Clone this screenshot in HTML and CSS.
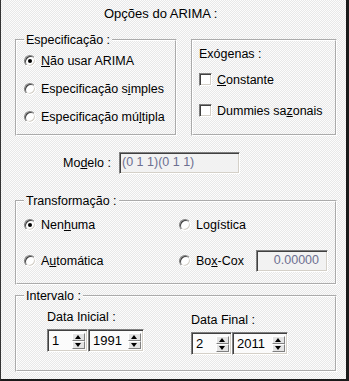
FILE: index.html
```html
<!DOCTYPE html>
<html lang="pt-BR">
<head>
  <meta charset="UTF-8">
  <meta name="viewport" content="width=device-width, initial-scale=1.0">
  <title>Opções do ARIMA</title>
  <link rel="stylesheet" href="styles.css">
</head>
<body>
  <div class="dialog">
    <div class="title">Opções do ARIMA :</div>

    <div class="top-row">
      <fieldset class="group spec">
        <legend>Especificação :</legend>
        <label class="opt"><span class="radio on"></span><u>N</u>ão usar ARIMA</label>
        <label class="opt"><span class="radio"></span>Especificação s<u>i</u>mples</label>
        <label class="opt"><span class="radio"></span>Especificação mú<u>l</u>tipla</label>
      </fieldset>

      <div class="group exo">
        <div class="exo-title">Exógenas :</div>
        <label class="opt tall first"><span class="check"></span><u>C</u>onstante</label>
        <label class="opt tall"><span class="check"></span>Dummies sa<u>z</u>onais</label>
      </div>
    </div>

    <div class="model-row">
      <span class="model-label">Mo<u>d</u>elo :</span>
      <div class="field model-field">(0 1 1)(0 1 1)</div>
    </div>

    <fieldset class="group wide transf">
      <legend>Transformação :</legend>
      <div class="transf-grid">
        <label class="opt mid"><span class="radio on"></span>Nen<u>h</u>uma</label>
        <label class="opt mid"><span class="radio"></span>Lo<u>g</u>ística</label>
        <label class="opt mid"><span class="radio"></span>A<u>u</u>tomática</label>
        <div class="opt mid">
          <span class="radio"></span>Bo<u>x</u>-Cox
          <div class="field boxcox">0.00000</div>
        </div>
      </div>
    </fieldset>

    <fieldset class="group wide interval">
      <legend>Intervalo :</legend>
      <div class="dates">
        <div class="date">
          <div class="date-label">Data Inicial :</div>
          <div class="spins">
            <div class="spin short"><span>1</span><span class="arrows"><i class="up"></i><i class="down"></i></span></div>
            <div class="spin long"><span>1991</span><span class="arrows"><i class="up"></i><i class="down"></i></span></div>
          </div>
        </div>
        <div class="date final">
          <div class="date-label">Data Final :</div>
          <div class="spins">
            <div class="spin short"><span>2</span><span class="arrows"><i class="up"></i><i class="down"></i></span></div>
            <div class="spin long"><span>2011</span><span class="arrows"><i class="up"></i><i class="down"></i></span></div>
          </div>
        </div>
      </div>
    </fieldset>
  </div>
</body>
</html>
```

FILE: styles.css
```css
body {
  margin: 0;
  font-family: "Liberation Sans", Arial, sans-serif;
  font-size: 12.5px;
  color: #000;
}
.dialog {
  width: 349px;
  height: 381px;
  box-sizing: border-box;
  padding-left: 14px;
  border-left: 1px solid #333;
  border-right: 3px solid #1a1a1a;
  border-bottom: 2px solid #1a1a1a;
  background: repeating-conic-gradient(#fcfcfc 0 25%, #e8e8e8 0 50%) 0 0 / 2px 2px;
}
.title {
  font-size: 13px;
  line-height: 20px;
  padding: 4px 0 9px 89px;
}
.top-row {
  display: flex;
  align-items: flex-start;
  gap: 14px;
}
.group {
  margin: 0;
  min-width: 0;
  box-sizing: border-box;
  border: 2px groove #fff;
  padding: 0 7px;
}
legend {
  padding: 0 2px;
  line-height: 14px;
}
.spec {
  width: 162px;
  height: 103px;
}
.exo {
  width: 146px;
  height: 97px;
  margin-top: 6px;
  padding: 6px 6px 0;
}
.exo-title {
  line-height: 15px;
}
.opt {
  display: flex;
  align-items: center;
  height: 28px;
  white-space: nowrap;
}
.opt.tall {
  height: 31px;
}
.opt.first {
  margin-top: 2px;
}
.opt.mid {
  height: 34px;
}
.radio {
  flex: none;
  position: relative;
  width: 12px;
  height: 12px;
  box-sizing: border-box;
  margin-right: 5px;
  border-radius: 50%;
  border: 1px solid;
  border-color: #808080 #fff #fff #808080;
  box-shadow: inset 1px 1px 0 #404040, inset -1px -1px 0 #d4d0c8;
  background: #fff;
}
.radio.on::after {
  content: "";
  position: absolute;
  left: 3px;
  top: 3px;
  width: 4px;
  height: 4px;
  border-radius: 50%;
  background: #000;
}
.check {
  flex: none;
  width: 13px;
  height: 13px;
  box-sizing: border-box;
  margin-right: 5px;
  border: 1px solid;
  border-color: #808080 #fff #fff #808080;
  box-shadow: inset 1px 1px 0 #404040, inset -1px -1px 0 #d4d0c8;
  background: #fff;
}
.field {
  box-sizing: border-box;
  height: 22px;
  line-height: 18px;
  border: 1px solid;
  border-color: #808080 #fff #fff #808080;
  box-shadow: inset 1px 1px 0 #404040, inset -1px -1px 0 #d4d0c8;
  background: #f2f2f2;
  color: #6c6f90;
  white-space: nowrap;
}
.model-row {
  display: flex;
  align-items: center;
  margin: 16px 0 0 48px;
}
.model-label {
  width: 56px;
}
.model-field {
  width: 121px;
  padding-left: 2px;
}
.wide {
  width: 322px;
}
.transf {
  margin-top: 20px;
  padding-bottom: 5px;
}
.transf-grid {
  display: grid;
  grid-template-columns: 155px 1fr;
  row-gap: 2px;
}
.boxcox {
  width: 72px;
  margin-left: auto;
  padding-right: 8px;
  text-align: right;
}
.interval {
  margin-top: 4px;
  padding-bottom: 15px;
}
.dates {
  display: grid;
  grid-template-columns: 144px 1fr;
  margin-left: 23px;
  padding-top: 7px;
}
.date.final {
  margin-top: 3px;
}
.date-label {
  line-height: 15px;
  margin-bottom: 4px;
}
.spins {
  display: flex;
}
.spin {
  display: flex;
  align-items: center;
  box-sizing: border-box;
  height: 23px;
  padding: 0 1px 0 4px;
  border: 1px solid;
  border-color: #808080 #fff #fff #808080;
  box-shadow: inset 1px 1px 0 #404040, inset -1px -1px 0 #d4d0c8;
  background: #fbfbfb;
  font-size: 13px;
}
.spin.short {
  width: 41px;
}
.spin.long {
  width: 56px;
}
.arrows {
  display: flex;
  flex-direction: column;
  margin-left: auto;
  margin-right: 1px;
}
.arrows i {
  position: relative;
  width: 13px;
  height: 8px;
  box-sizing: border-box;
  border: 1px solid;
  border-color: #fff #808080 #808080 #fff;
  background: #e4e4e4;
}
.arrows i::before {
  content: "";
  position: absolute;
  left: 2px;
  border-left: 3.5px solid transparent;
  border-right: 3.5px solid transparent;
}
.arrows .up::before {
  top: 1px;
  border-bottom: 4px solid #000;
}
.arrows .down::before {
  top: 1px;
  border-top: 4px solid #000;
}
```
